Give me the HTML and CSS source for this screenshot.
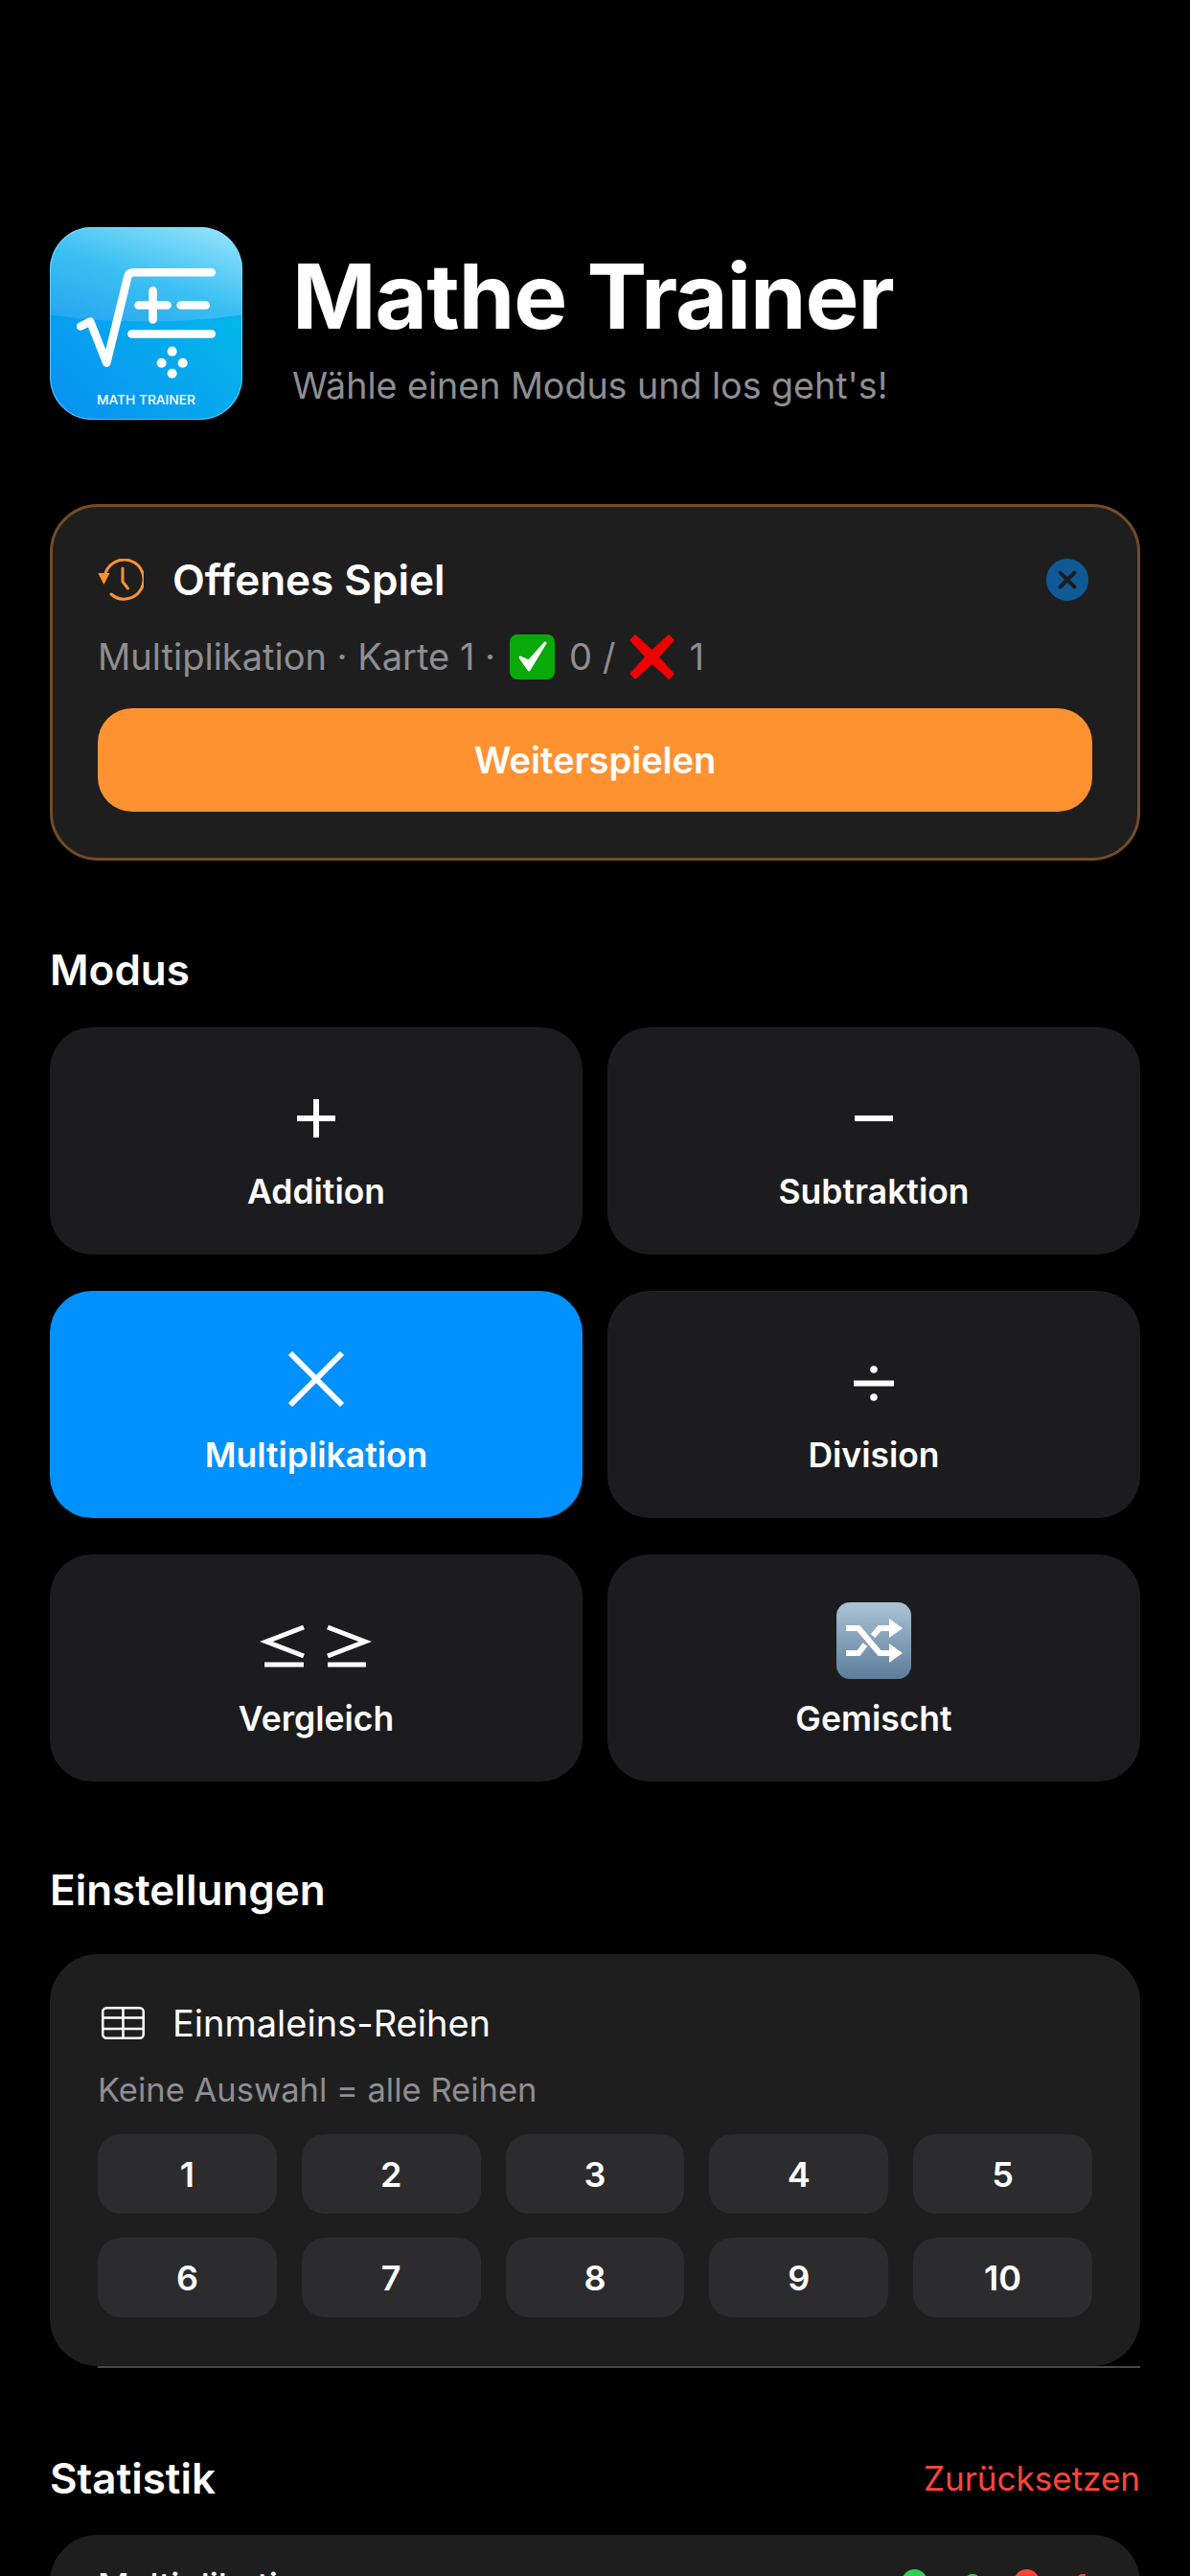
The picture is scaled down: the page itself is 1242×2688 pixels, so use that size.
FILE: index.html
```html
<!DOCTYPE html>
<html>
<head>
  <meta charset="utf-8">
  <link rel="stylesheet" href="styles.css">
</head>
<body>
  <div class="screen">
    <header class="header">
      <svg class="app-icon" viewBox="0 0 200 200">
        <defs>
          <linearGradient id="iconTop" x1="0.1" y1="1" x2="0.8" y2="0">
            <stop offset="0" stop-color="#27a6ef"/>
            <stop offset="0.5" stop-color="#3cc0f3"/>
            <stop offset="1" stop-color="#8ce0fb"/>
          </linearGradient>
          <linearGradient id="iconBottom" x1="0" y1="1" x2="1" y2="0">
            <stop offset="0" stop-color="#0a8ff3"/>
            <stop offset="1" stop-color="#02c4e6"/>
          </linearGradient>
          <clipPath id="iconClip"><rect width="200" height="200" rx="44"/></clipPath>
        </defs>
        <g clip-path="url(#iconClip)">
          <rect width="200" height="200" fill="url(#iconBottom)"/>
          <path d="M0 0H200V91Q100 105 0 91Z" fill="url(#iconTop)"/>
        </g>
        <rect x="0.5" y="0.5" width="199" height="199" rx="44" fill="none" stroke="#8fdcfa" stroke-opacity="0.6"/>
        <g fill="none" stroke="#fff" stroke-width="8.500" stroke-linecap="round" stroke-linejoin="round">
          <path d="M32 103L42 98L59 141L81 51Q82 47 87 47H168"/>
          <path d="M85 111H168"/>
          <path d="M92 81H122M107 66V96"/>
          <path d="M136 81H162"/>
        </g>
        <g fill="#fff">
          <circle cx="127" cy="129" r="5"/>
          <circle cx="116" cy="141" r="5"/>
          <circle cx="138" cy="141" r="5"/>
          <circle cx="127" cy="152" r="5"/>
        </g>
        <text class="icon-label" x="100" y="184" text-anchor="middle">MATH TRAINER</text>
      </svg>
      <div class="header-text">
        <h1>Mathe Trainer</h1>
        <p>Wähle einen Modus und los geht's!</p>
      </div>
    </header>

    <section class="card resume">
      <div class="resume-head">
        <svg class="resume-icon" viewBox="0 0 48 44" fill="none" stroke="#ff9230" stroke-width="3" stroke-linecap="round" stroke-linejoin="round">
          <path d="M7.200 19A20.500 20.500 0 1 1 14 37"/>
          <path d="M26 10V24L31.500 31"/>
          <path d="M0.300 15H12.500L6.400 27Z" fill="#ff9230" stroke="none"/>
        </svg>
        <h2>Offenes Spiel</h2>
        <svg class="close-icon" viewBox="0 0 44 44">
          <circle cx="22" cy="22" r="22" fill="#0f5a96"/>
          <path d="M14.500 14.500L29.500 29.500M29.500 14.500L14.500 29.500" stroke="#1c1c1e" stroke-width="4" stroke-linecap="round"/>
        </svg>
      </div>
      <p class="resume-info">
        <span>Multiplikation · Karte 1 ·</span>
        <svg class="emoji" viewBox="0 0 47 47">
          <rect width="47" height="47" rx="8" fill="#0aa90a"/>
          <path d="M11 24L20 37L37 9L20 28Z" fill="#fff" stroke="#fff" stroke-width="3" stroke-linejoin="round"/>
        </svg>
        <span>0 /</span>
        <svg class="emoji" viewBox="0 0 47 47">
          <path d="M6 0L23.500 16L41 0L47 6L31 23.500L47 41L41 47L23.500 31L6 47L0 41L16 23.500L0 6Z" fill="#f00000"/>
        </svg>
        <span>1</span>
      </p>
      <button class="resume-btn">Weiterspielen</button>
    </section>

    <h3 class="section-title modus-title">Modus</h3>
    <div class="modes">
      <div class="mode">
        <svg class="mode-icon" viewBox="0 0 60 80"><path d="M10 45H50M30 25V65" class="sym"/></svg>
        <span>Addition</span>
      </div>
      <div class="mode">
        <svg class="mode-icon" viewBox="0 0 60 80"><path d="M10 45H50" class="sym"/></svg>
        <span>Subtraktion</span>
      </div>
      <div class="mode active">
        <svg class="mode-icon" viewBox="0 0 60 80"><path d="M3 15L57 69M57 15L3 69" class="sym"/></svg>
        <span>Multiplikation</span>
      </div>
      <div class="mode">
        <svg class="mode-icon" viewBox="0 0 60 80"><path d="M9 46.500H51" class="sym"/><circle cx="30" cy="32" r="3.800" fill="#fff"/><circle cx="30" cy="61" r="3.800" fill="#fff"/></svg>
        <span>Division</span>
      </div>
      <div class="mode">
        <svg class="mode-icon wide" viewBox="0 0 120 80"><path d="M47 26L8 41L47 56M6 65H47M72 26L111 41L72 56M72 65H112" class="sym thin"/></svg>
        <span>Vergleich</span>
      </div>
      <div class="mode">
        <svg class="mode-icon square" viewBox="0 0 80 80">
          <defs>
            <linearGradient id="shuffleBg" x1="0" y1="0" x2="0" y2="1">
              <stop offset="0" stop-color="#abc3d6"/>
              <stop offset="1" stop-color="#5d7d9b"/>
            </linearGradient>
          </defs>
          <rect x="1" y="0" width="78" height="80" rx="14" fill="url(#shuffleBg)"/>
          <path d="M11 27H24L46 53H57M11 53H24L31 44M39 35L46 27H57" fill="none" stroke="#fff" stroke-width="6"/>
          <path d="M56 17L70 27L56 37ZM56 43L70 53L56 63Z" fill="#fff"/>
        </svg>
        <span>Gemischt</span>
      </div>
    </div>

    <h3 class="section-title settings-title">Einstellungen</h3>
    <section class="card settings">
      <div class="settings-head">
        <svg class="table-icon" viewBox="0 0 45 34" fill="none" stroke="#fff" stroke-width="2.500">
          <rect x="1.250" y="1.250" width="42.500" height="31.500" rx="4"/>
          <path d="M1 11.500H44M1 23H44M22.500 1V33"/>
        </svg>
        <h4>Einmaleins-Reihen</h4>
      </div>
      <p class="settings-hint">Keine Auswahl = alle Reihen</p>
      <div class="chips">
        <div class="chip">1</div>
        <div class="chip">2</div>
        <div class="chip">3</div>
        <div class="chip">4</div>
        <div class="chip">5</div>
        <div class="chip">6</div>
        <div class="chip">7</div>
        <div class="chip">8</div>
        <div class="chip">9</div>
        <div class="chip">10</div>
      </div>
    </section>
    <div class="divider"></div>

    <div class="stats-head">
      <h3 class="section-title">Statistik</h3>
      <span class="reset">Zurücksetzen</span>
    </div>
    <section class="card stats">
      <div class="stats-row">
        <span class="stats-name">Multiplikation</span>
        <span class="dot green"></span>
        <span class="stats-num num-green">0</span>
        <span class="dot red"></span>
        <span class="stats-num num-red">1</span>
      </div>
    </section>
  </div>
</body>
</html>
```

FILE: styles.css
```css
html, body {
  margin: 0;
  background: #000;
}

.screen {
  font-family: Inter, "Liberation Sans", sans-serif;
  color: #fff;
  box-sizing: border-box;
  height: 2688px;
  overflow: hidden;
  padding: 237px 52px 0;
}

h1, h2, h3, h4, p {
  margin: 0;
}

.header {
  display: flex;
  align-items: center;
  gap: 52px;
}

.app-icon {
  width: 201px;
  height: 201px;
  flex: none;
}

.icon-label {
  font-size: 13.700px;
  font-weight: 500;
  fill: #fff;
}

.header-text {
  padding-top: 5px;
}

.header-text h1 {
  font-size: 94px;
  font-weight: 700;
  line-height: 110px;
  letter-spacing: -1px;
}

.header-text p {
  font-size: 37.600px;
  line-height: 48px;
  color: #8e8e93;
  margin-top: 15px;
}

.card {
  background: #1e1e1e;
  border-radius: 50px;
}

.resume {
  margin-top: 88px;
  height: 372px;
  box-sizing: border-box;
  padding: 54px 47px 0;
  border: 3px solid #754c26;
}

.resume-head {
  display: flex;
  align-items: center;
  height: 44px;
}

.resume-icon {
  width: 48px;
  height: 44px;
  margin-right: 30px;
}

.resume-head h2 {
  flex: 1;
  font-size: 44px;
  font-weight: 600;
}

.close-icon {
  width: 44px;
  height: 44px;
  margin-right: 4px;
}

.resume-info {
  display: flex;
  align-items: center;
  gap: 15px;
  margin-top: 34px;
  height: 48px;
  font-size: 38px;
  color: #8e8e93;
}

.emoji {
  width: 47px;
  height: 47px;
}

.resume-btn {
  display: block;
  width: 100%;
  height: 108px;
  margin-top: 30px;
  border: none;
  border-radius: 36px;
  background: #ff9230;
  color: #fff;
  font-family: inherit;
  font-size: 38px;
  font-weight: 600;
}

.section-title {
  font-size: 44px;
  font-weight: 600;
  line-height: 50px;
}

.modus-title {
  margin-top: 89px;
}

.modes {
  display: grid;
  grid-template-columns: 1fr 1fr;
  grid-auto-rows: 237px;
  column-gap: 26px;
  row-gap: 38px;
  margin-top: 35px;
}

.mode {
  display: flex;
  flex-direction: column;
  align-items: center;
  background: #1c1c1e;
  border-radius: 44px;
  padding-top: 50px;
  box-sizing: border-box;
  font-size: 35.500px;
  font-weight: 600;
}

.mode span {
  margin-top: 22px;
  line-height: 40px;
}

.mode.active {
  background: #0091ff;
}

.mode-icon {
  width: 60px;
  height: 80px;
  flex: none;
}

.mode-icon.wide {
  width: 120px;
}

.mode-icon.square {
  width: 80px;
}

.sym {
  fill: none;
  stroke: #fff;
  stroke-width: 6;
}

.sym.thin {
  stroke-width: 5;
}

.settings-title {
  margin-top: 88px;
}

.settings {
  margin-top: 42px;
  height: 430px;
  box-sizing: border-box;
  padding: 55px 50px 0;
}

.settings-head {
  display: flex;
  align-items: center;
  height: 34px;
}

.table-icon {
  width: 45px;
  height: 34px;
  margin: 0 29px 0 4px;
}

.settings-head h4 {
  font-size: 38px;
  font-weight: 400;
}

.settings-hint {
  margin-top: 33px;
  font-size: 34.500px;
  line-height: 40px;
  color: #8e8e93;
}

.chips {
  display: grid;
  grid-template-columns: repeat(5, 1fr);
  grid-auto-rows: 83px;
  column-gap: 26px;
  row-gap: 25px;
  margin-top: 26px;
}

.chip {
  display: flex;
  align-items: center;
  justify-content: center;
  background: #2c2c2e;
  border-radius: 24px;
  font-size: 36px;
  font-weight: 600;
}

.divider {
  height: 2px;
  margin-left: 50px;
  background: #48484a;
}

.stats-head {
  display: flex;
  justify-content: space-between;
  align-items: center;
  margin-top: 90px;
}

.reset {
  font-size: 35px;
  color: #ff453a;
}

.stats {
  margin-top: 34px;
  height: 300px;
  box-sizing: border-box;
  padding: 36px 44px 0 50px;
}

.stats-row {
  display: flex;
  align-items: flex-start;
  font-size: 36px;
  font-weight: 500;
  line-height: 40px;
}

.stats-name {
  flex: 1;
  margin-top: -3px;
}

.dot {
  width: 27px;
  height: 27px;
  border-radius: 50%;
}

.dot.green {
  background: #30d158;
}

.dot.red {
  background: #ff453a;
  margin-left: 25px;
}

.stats-num {
  width: 36px;
  margin-left: 29px;
  margin-top: -2px;
  text-align: center;
}

.num-green {
  color: #30d158;
}

.num-red {
  color: #ff453a;
  margin-left: 25px;
}
```
